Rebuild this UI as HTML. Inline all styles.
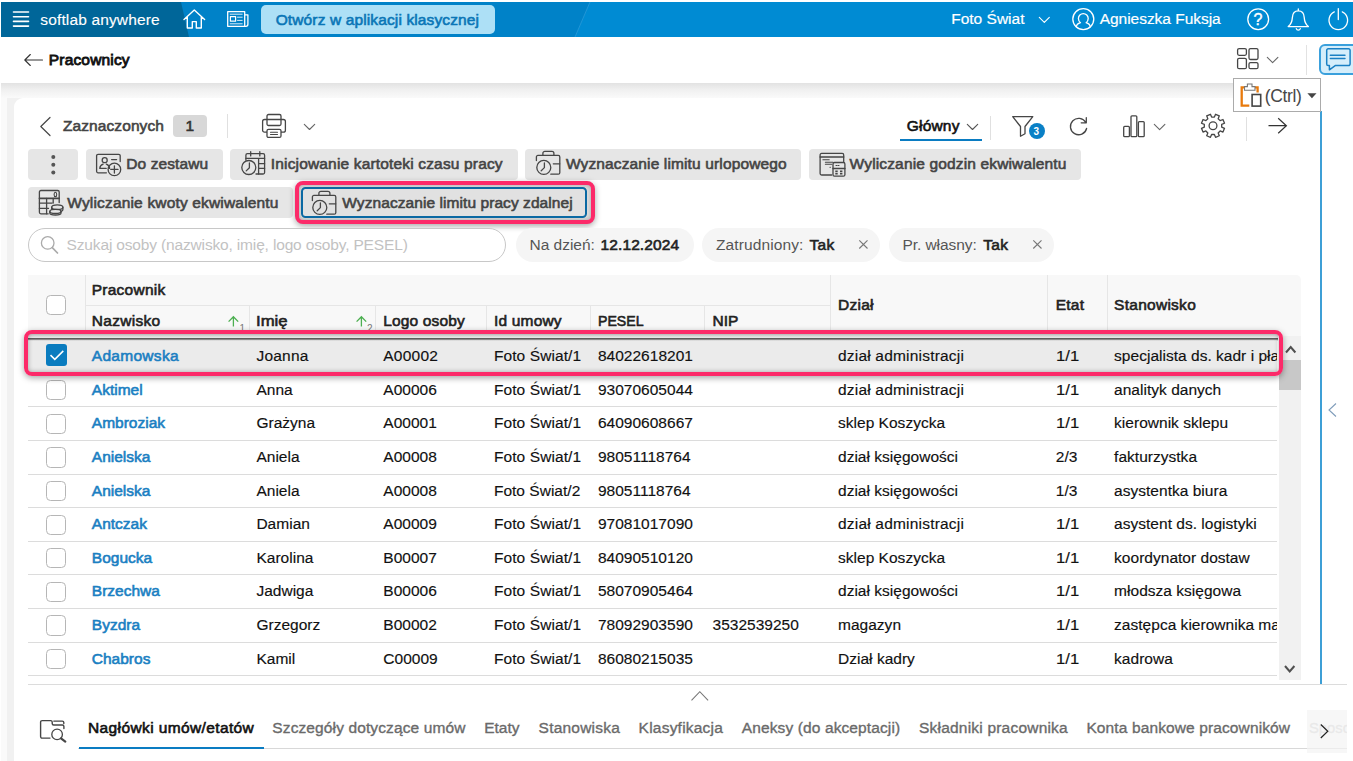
<!DOCTYPE html>
<html lang="pl"><head><meta charset="utf-8"><title>Pracownicy</title>
<style>
*{box-sizing:border-box;margin:0;padding:0}
html,body{width:1353px;height:761px;overflow:hidden;background:#fff}
body{position:relative;font-family:"Liberation Sans",sans-serif;font-size:15px;color:#111}
.a{position:absolute}
.t{position:absolute;white-space:nowrap;line-height:20px;height:20px;margin-top:-10px}
svg{position:absolute;overflow:visible}
.ic{fill:none;stroke:#464646;stroke-width:1.3;stroke-linecap:round;stroke-linejoin:round}
.icw{fill:none;stroke:#fff;stroke-width:1.4;stroke-linecap:round;stroke-linejoin:round}
.btn{position:absolute;height:30.5px;background:#e6e6e6;border-radius:4px}
.chip{position:absolute;height:34px;top:227.500px;background:#f5f5f5;border-radius:17px}
.cb{position:absolute;left:45.600px;width:20.400px;height:20.400px;border:1.600px solid #b6b6b6;border-radius:4.500px;background:#fff}
.hl{position:absolute;background:#dcdcdc;height:1px}
.vl{position:absolute;background:#e6e6e6;width:1px}
</style></head><body>
<div class="a" style="left:1px;top:2px;width:1352px;height:35px;background:#008bd3"></div>
<svg style="left:0;top:2px" width="600" height="35"><polygon points="1,0 590,0 575,35 1,35" fill="#0082c8"/><path d="M590 0L575 35" stroke="#3aa3dc" stroke-width="1" fill="none" opacity=".55"/></svg>
<svg style="left:0;top:2px" width="200" height="35"><polygon points="1,0 181,0 189,35 1,35" fill="#006699"/></svg>
<div class="a" style="left:0;top:37px;width:1353px;height:46px;background:#fff"></div>
<div class="a" style="left:1px;top:83px;width:1320px;height:678px;background:#fafafa"></div>
<div class="a" style="left:1px;top:83px;width:1320px;height:15px;background:linear-gradient(180deg,#e2e2e2 0,#f0f0f0 45%,#fafafa 100%)"></div>
<div class="a" style="left:7px;top:98.300px;width:30px;height:663px;background:#f1f1f1"></div>
<div class="a" style="left:14.300px;top:98.300px;width:1333px;height:663px;background:#fff;border-top-left-radius:9px"></div>
<div class="a" style="left:1321px;top:83px;width:32px;height:602px;background:#fff"></div>
<div class="a" style="left:1320.3px;top:111px;width:1.7px;height:573px;background:#3d9fd6"></div>
<svg style="left:13px;top:11px" width="17" height="17" class="icw"><path d="M0.5 1h15M0.5 5.7h15M0.5 10.4h15M0.5 15.1h15" stroke-width="1.6"/></svg>
<div class="t" style="left:40.3px;top:19.5px;font-size:15.50px;color:#fff;-webkit-text-stroke:0.12px #fff;letter-spacing:0.143px;">softlab anywhere</div>
<svg style="left:183px;top:8.5px" width="23" height="20" class="icw"><path d="M1 10.5L11.3 1L21.6 10.5M4.3 8.3V19h5v-6.4h4V19h5V8.3"/></svg>
<svg style="left:227px;top:11px" width="22" height="16" class="icw"><path d="M0.7 0.7h17v14.6h-17zM17.7 3.8h3.2v9.5a2 2 0 0 1-2 2h-1.2" stroke-width="1.3"/><path d="M3.2 3.2h12M3.2 12.8h12M10.5 6.2h4.7M10.5 9.4h4.7" stroke-width="1" opacity=".85"/><rect x="3.4" y="5.6" width="5.2" height="4.6" stroke-width="1.2"/></svg>
<div class="a" style="left:261.3px;top:5px;width:233.7px;height:28.7px;background:#ade0f6;border-radius:5px"></div>
<div class="t" style="left:275.7px;top:19.5px;font-size:15.50px;color:#0a76b6;-webkit-text-stroke:0.60px #0a76b6;letter-spacing:0.125px;">Otwórz w aplikacji klasycznej</div>
<div class="t" style="left:951.2px;top:19.4px;font-size:15.50px;color:#fff;-webkit-text-stroke:0.20px #fff;letter-spacing:0.007px;">Foto Świat</div>
<svg style="left:1038.8px;top:16.5px" width="11" height="6" class="icw"><path d="M0.3 0.3L5.3 5.3L10.3 0.3" stroke-width="1.1"/></svg>
<svg style="left:1072px;top:7.600px" width="23" height="23" class="icw"><circle cx="11.300" cy="11.100" r="10.500" stroke-width="1.300"/><path d="M4.300 18.800c.2-2.300 1.600-3.300 4.200-4.100c-1.500-1-2.100-2.400-2.100-4.200a4.900 4.900 0 0 1 9.800 0c0 1.800-.6 3.200-2.100 4.200c2.600.8 4 1.800 4.200 4.100" stroke-width="1.300"/></svg>
<div class="t" style="left:1099.7px;top:19.4px;font-size:15.50px;color:#fff;-webkit-text-stroke:0.20px #fff;letter-spacing:-0.031px;">Agnieszka Fuksja</div>
<svg style="left:1247px;top:8px" width="23" height="23" class="icw"><circle cx="11.200" cy="11.200" r="10.400" stroke-width="1.300"/></svg>
<div class="t" style="left:1253.5px;top:19.5px;font-size:16.00px;color:#fff;-webkit-text-stroke:0.40px #fff;letter-spacing:0.694px;">?</div>
<svg style="left:1287.300px;top:7.500px" width="23" height="23" class="icw"><path d="M1.200 18.600c3-2.200 3.900-4.600 4.200-9.200c.2-4 2.600-6.600 5.900-6.600s5.700 2.600 5.900 6.600c.3 4.600 1.200 7 4.200 9.200zM11.300 2.800V1M9.300 20.600a2.100 2.100 0 0 0 4 0" stroke-width="1.300"/></svg>
<svg style="left:1328.400px;top:8px" width="21" height="22" class="icw"><path d="M6.300 3.900a9.300 9.300 0 1 0 8 0M10.300 0.600v11" stroke-width="1.300"/></svg>
<svg style="left:24px;top:53.5px" width="19" height="12" class="ic"><path d="M18.5 6H0.800M6.300 0.500L0.800 6L6.300 11.500" stroke="#333" stroke-width="1.1"/></svg>
<div class="t" style="left:48.8px;top:59.8px;font-size:15.50px;color:#111;-webkit-text-stroke:0.85px #111;letter-spacing:0.174px;">Pracownicy</div>
<svg style="left:1236.6px;top:48px" width="22" height="21" class="ic"><rect x="0.600" y="0.600" width="8.800" height="6.700" rx="1.500"/><rect x="12" y="0.600" width="9" height="10.900" rx="1.500"/><rect x="0.600" y="10.300" width="8.800" height="10.400" rx="1.500"/><rect x="12" y="14.600" width="9" height="6.100" rx="1.500"/></svg>
<svg style="left:1266.8px;top:57px" width="12" height="6" class="ic"><path d="M0.300 0.300L5.600 5.600L10.900 0.300" stroke-width="1.1" stroke="#666"/></svg>
<div class="a" style="left:1306px;top:45px;width:1px;height:30px;background:#e2e2e2"></div>
<div class="a" style="left:1319px;top:44.300px;width:40px;height:31px;background:#d5eefb;border:2px solid #3aa0dc;border-radius:6px"></div>
<svg style="left:1326.400px;top:47.500px" width="25" height="23" class="ic"><path d="M2.200 0.800h20.400a1.500 1.500 0 0 1 1.500 1.500v13.800a1.500 1.500 0 0 1-1.500 1.500h-13.400l-5.800 4.200v-4.200h-1.200a1.500 1.500 0 0 1-1.500-1.500v-13.800a1.500 1.500 0 0 1 1.500-1.500z" stroke="#1a80c4" stroke-width="1.500"/><path d="M4.300 7.300h14.700M4.300 10.500h14.700" stroke="#1a80c4" stroke-width="1.400"/></svg>
<div class="a" style="left:1233.300px;top:78.200px;width:87.500px;height:33.500px;background:#fff;border:1px solid #ababab"></div>
<svg style="left:1240.400px;top:84px" width="22" height="23"><path d="M6 3.300H1.700V21.600H9.300M15 3.300h2.600V8.500" fill="none" stroke="#e87a0c" stroke-width="2.300"/><path d="M4.500 6.200V2.600h2.900V0h4.600v2.600h3v3.600z" fill="#fff" stroke="#777" stroke-width="1.100"/><rect x="12.100" y="10.500" width="8.600" height="11.600" fill="#fff" stroke="#444" stroke-width="1.600"/></svg>
<div class="t" style="left:1264.8px;top:95.6px;font-size:17.50px;color:#484848;letter-spacing:-0.377px;">(Ctrl)</div>
<svg style="left:1306.500px;top:92.800px" width="10" height="6"><polygon points="0.400,0.200 9.500,0.200 4.950,5.300" fill="#444"/></svg>
<svg style="left:39.700px;top:116.500px" width="11" height="19" class="ic"><path d="M10 0.500L0.800 9.500L10 18.500" stroke-width="1.200"/></svg>
<div class="t" style="left:62.9px;top:126.3px;font-size:15.50px;color:#444;-webkit-text-stroke:0.60px #444;letter-spacing:0.100px;">Zaznaczonych</div>
<div class="a" style="left:173.400px;top:115px;width:33.600px;height:22.300px;background:#d8d8d8;border-radius:4px"></div>
<div class="t" style="left:185.6px;top:126.3px;font-size:15.50px;color:#333;-webkit-text-stroke:0.60px #333;letter-spacing:-0.225px;">1</div>
<div class="a" style="left:227px;top:114px;width:1px;height:24px;background:#e0e0e0"></div>
<svg style="left:262px;top:114px" width="24" height="24" class="ic"><rect x="0.600" y="5.500" width="22.800" height="12.700" rx="2"/><rect x="5" y="0.500" width="14" height="11" rx="1.500"/><rect x="5" y="15.300" width="14" height="8.100" rx="1.500" fill="#fff"/><path d="M8.500 18.200h7M8.500 20.500h7" stroke-width="1.100"/></svg>
<svg style="left:303.500px;top:123.500px" width="12" height="6" class="ic"><path d="M0.300 0.300L5.500 5.500L10.700 0.300" stroke-width="1.100" stroke="#666"/></svg>
<div class="t" style="left:906.8px;top:126.3px;font-size:15.50px;color:#111;-webkit-text-stroke:0.60px #111;letter-spacing:0.184px;">Główny</div>
<svg style="left:967px;top:123.500px" width="12" height="6" class="ic"><path d="M0.300 0.300L5.500 5.500L10.700 0.300" stroke-width="1.100" stroke="#555"/></svg>
<div class="a" style="left:900px;top:139.300px;width:82px;height:2px;background:#0a7cc2"></div>
<div class="a" style="left:990px;top:116px;width:1px;height:24px;background:#e0e0e0"></div>
<svg style="left:1012.300px;top:116.300px" width="22" height="21" class="ic"><path d="M0.700 0.700H20.800L13 10.500V17.800L8.500 20.300V10.500z"/></svg>
<svg style="left:1028.700px;top:123.400px" width="16" height="16"><circle cx="8" cy="8" r="8" fill="#0a80c6"/></svg>
<div class="t" style="left:1033.4px;top:131.6px;font-size:10.00px;color:#fff;font-weight:bold;letter-spacing:1.037px;">3</div>
<svg style="left:1068.800px;top:116.500px" width="19" height="19" class="ic"><path d="M16.800 5.500A8.200 8.200 0 1 0 17.600 11.500M17.300 0.700V5.800H12.200"/></svg>
<svg style="left:1123px;top:115.400px" width="22" height="22" class="ic"><rect x="0.700" y="11.400" width="5.700" height="10.300" rx="1"/><rect x="8" y="0.800" width="5.800" height="20.900" rx="1"/><rect x="15.400" y="6.600" width="5.800" height="15.100" rx="1"/></svg>
<svg style="left:1153.700px;top:123.700px" width="12" height="6" class="ic"><path d="M0.300 0.300L5.600 5.600L10.900 0.300" stroke-width="1.100" stroke="#666"/></svg>
<svg style="left:1200.700px;top:114px" width="24" height="24" class="ic"><path d="M14.57 0.28L18.32 1.84L17.17 4.68L19.12 6.63L21.96 5.48L23.52 9.23L20.69 10.42L20.69 13.18L23.52 14.37L21.96 18.12L19.12 16.97L17.17 18.92L18.32 21.76L14.57 23.32L13.38 20.49L10.62 20.49L9.43 23.32L5.68 21.76L6.83 18.92L4.88 16.97L2.04 18.12L0.48 14.37L3.31 13.18L3.31 10.42L0.48 9.23L2.04 5.48L4.88 6.63L6.83 4.68L5.68 1.84L9.43 0.28L10.62 3.11L13.38 3.11z" stroke-linejoin="round"/><circle cx="12" cy="11.800" r="3.900"/></svg>
<div class="a" style="left:1246px;top:116.500px;width:1px;height:24px;background:#e0e0e0"></div>
<svg style="left:1268px;top:117.800px" width="19" height="16" class="ic"><path d="M0.500 7.700H18.200M10.200 0.200L18.400 7.700L10.200 15.200" stroke="#333" stroke-width="1.200" stroke-linecap="butt" stroke-linejoin="miter"/></svg>
<div class="btn" style="left:28.0px;top:149.0px;width:50.4px"></div>
<svg style="left:50.800px;top:154.500px" width="5" height="20"><circle cx="2.300" cy="2" r="2" fill="#555"/><circle cx="2.300" cy="9.700" r="2" fill="#555"/><circle cx="2.300" cy="17.400" r="2" fill="#555"/></svg>
<div class="btn" style="left:86.2px;top:149.0px;width:136.4px"></div>
<svg style="left:96.4px;top:152.8px" width="26" height="25" class="ic"><path d="M10.400 19.800H2.100a1.500 1.500 0 0 1-1.500-1.500V2.800a1.500 1.500 0 0 1 1.500-1.500H22.700a1.500 1.500 0 0 1 1.500 1.500V8.600"/><circle cx="8.700" cy="7.200" r="2.500"/><path d="M3.800 15.400c0-2.600 1.400-3.600 3.300-4.300M13.600 15.400c0-2.600-1.400-3.600-3.300-4.300M3.800 15.400h6.400"/><path d="M15.600 6.600h5"/><circle cx="18.400" cy="16.400" r="6.300"/><path d="M18.400 12.800v7.200M14.800 16.400h7.200"/></svg>
<div class="t" style="left:126.3px;top:164.3px;font-size:15.50px;color:#444;-webkit-text-stroke:0.60px #444;letter-spacing:0.096px;">Do zestawu</div>
<div class="btn" style="left:230.0px;top:149.0px;width:287.7px"></div>
<svg style="left:240.5px;top:150.5px" width="25" height="25" class="ic"><path d="M4.900 9V4.200a1.500 1.500 0 0 1 1.500-1.500h15.700a1.500 1.500 0 0 1 1.500 1.500v17.300a1.500 1.500 0 0 1-1.500 1.500H15"/><path d="M9.700 0.700v4.200M18.800 0.700v4.200M4.900 7.400h18.700M17.600 7.400v15.600M17.600 12.700h6M17.600 17.400h6"/><circle cx="7.800" cy="16.500" r="7"/><path d="M8.400 12v4.700l-3.200 3.200"/></svg>
<div class="t" style="left:270.8px;top:164.3px;font-size:15.50px;color:#444;-webkit-text-stroke:0.60px #444;letter-spacing:0.164px;">Inicjowanie kartoteki czasu pracy</div>
<div class="btn" style="left:525.2px;top:149.0px;width:276.3px"></div>
<svg style="left:535.5px;top:151.0px" width="25" height="25" class="ic"><path d="M6.900 4.400V2.300a2 2 0 0 1 2-2h7a2 2 0 0 1 2 2V4.400"/><path d="M0.400 9.500V5.900a1.500 1.500 0 0 1 1.500-1.500h20.400a1.500 1.500 0 0 1 1.500 1.500v15.800a1.500 1.500 0 0 1-1.500 1.500H14.800"/><path d="M17.300 12.800h6.400"/><circle cx="7.800" cy="16.400" r="7"/><path d="M8.400 11.800v4.800l-3.200 3.200"/></svg>
<div class="t" style="left:565.9px;top:164.3px;font-size:15.50px;color:#444;-webkit-text-stroke:0.60px #444;letter-spacing:0.134px;">Wyznaczanie limitu urlopowego</div>
<div class="btn" style="left:809.3px;top:149.0px;width:271.7px"></div>
<svg style="left:820.0px;top:152.5px" width="26" height="24" class="ic"><path d="M11.700 22H1.600a1.500 1.500 0 0 1-1.500-1.500V1.900a1.500 1.500 0 0 1 1.500-1.500H22.200a1.500 1.500 0 0 1 1.500 1.500V8.800"/><path d="M0.100 4.100H23.700" stroke-width="1.500"/><path d="M2.900 6.800h6.300M5.400 9.300h7.600M5.400 11.300h6.300M10 14.200h.4" stroke-width="1.100"/><rect x="13" y="9.500" width="11.900" height="13.700" rx="1.500"/><path d="M13 15.400h11.900" stroke-width="1.500"/><path d="M16 12.500h1M18 12.500h1" stroke-width="1"/><path d="M15.300 18.300h2.400M20 18.300h2.400M15.300 20.600h2.400M20 20.600h2.400" stroke-width="1.600" stroke-linecap="butt"/></svg>
<div class="t" style="left:849.6px;top:164.3px;font-size:15.50px;color:#444;-webkit-text-stroke:0.60px #444;letter-spacing:0.149px;">Wyliczanie godzin ekwiwalentu</div>
<div class="btn" style="left:28.0px;top:187.2px;width:264.9px"></div>
<svg style="left:39.0px;top:190.0px" width="25" height="26" class="ic"><path d="M9.200 23.800H1.900a1.500 1.500 0 0 1-1.500-1.500V2a1.500 1.500 0 0 1 1.500-1.500H18.700a1.500 1.500 0 0 1 1.500 1.500V12.500"/><path d="M0.400 8.400H20.200" stroke-width="1.600"/><path d="M0.400 13.100H13M0.400 18.400H9.500M7.600 8.400V23.800M14.200 8.400V13"/><ellipse cx="16.400" cy="4.400" rx="1.300" ry="2.200" stroke-width="1.100"/><ellipse cx="18.300" cy="17.200" rx="5.600" ry="2.300"/><path d="M12.700 17.200v2.200c0 1.300 2.500 2.300 5.600 2.300s5.600-1 5.600-2.300v-2.200"/><ellipse cx="16.400" cy="21.400" rx="5.600" ry="2" fill="#e6e6e6"/><path d="M10.800 21.400v1.500c0 1.200 2.500 2.100 5.600 2.100s5.600-.9 5.600-2.100v-1.500"/></svg>
<div class="t" style="left:67.3px;top:202.5px;font-size:15.50px;color:#444;-webkit-text-stroke:0.60px #444;letter-spacing:0.167px;">Wyliczanie kwoty ekwiwalentu</div>
<div class="a" style="left:294.700px;top:180.500px;width:300.300px;height:43.500px;border:4.200px solid #fc2a69;border-radius:8px;background:#dcdcdc;box-shadow:0 2px 6px rgba(0,0,0,.35), inset 0 0 4px rgba(0,0,0,.25)"></div>
<div class="a" style="left:301.300px;top:187.100px;width:285.900px;height:30.800px;background:#e1e1e1;border:2px solid #0a69a3;border-radius:4.500px"></div>
<svg style="left:311.9px;top:190.6px" width="25" height="25" class="ic"><path d="M6.900 4.400V2.300a2 2 0 0 1 2-2h7a2 2 0 0 1 2 2V4.400"/><path d="M0.400 9.500V5.900a1.500 1.500 0 0 1 1.500-1.500h20.400a1.500 1.500 0 0 1 1.500 1.500v15.800a1.500 1.500 0 0 1-1.500 1.500H14.800"/><path d="M17.300 12.800h6.400"/><circle cx="7.800" cy="16.400" r="7"/><path d="M8.400 11.800v4.800l-3.200 3.200"/></svg>
<div class="t" style="left:342.3px;top:202.5px;font-size:15.50px;color:#444;-webkit-text-stroke:0.60px #444;letter-spacing:0.071px;">Wyznaczanie limitu pracy zdalnej</div>
<div class="a" style="left:28px;top:227.500px;width:478px;height:34.500px;border:1px solid #c8c8c8;border-radius:17.500px;background:#fff"></div>
<svg style="left:41px;top:236px" width="18" height="18" class="ic"><circle cx="6.700" cy="6.900" r="6.300" stroke="#aaa"/><path d="M11.300 11.600L16.500 17" stroke="#aaa" stroke-width="1.700"/></svg>
<div class="t" style="left:66.6px;top:245.0px;font-size:15.50px;color:#c2c2c2;letter-spacing:-0.158px;">Szukaj osoby (nazwisko, imię, logo osoby, PESEL)</div>
<div class="chip" style="left:515.6px;width:178.4px"></div>
<div class="chip" style="left:702.3px;width:178.2px"></div>
<div class="chip" style="left:888.6px;width:165.4px"></div>
<div class="t" style="left:529.5px;top:244.8px;font-size:15.50px;color:#555;letter-spacing:-0.010px;">Na dzień:</div>
<div class="t" style="left:600.6px;top:244.8px;font-size:15.50px;color:#222;-webkit-text-stroke:0.60px #222;letter-spacing:0.097px;">12.12.2024</div>
<div class="t" style="left:715.9px;top:244.8px;font-size:15.50px;color:#555;letter-spacing:0.124px;">Zatrudniony:</div>
<div class="t" style="left:809.5px;top:244.8px;font-size:15.50px;color:#222;-webkit-text-stroke:0.60px #222;letter-spacing:0.270px;">Tak</div>
<div class="t" style="left:902.4px;top:244.8px;font-size:15.50px;color:#555;letter-spacing:-0.062px;">Pr. własny:</div>
<div class="t" style="left:983.3px;top:244.8px;font-size:15.50px;color:#222;-webkit-text-stroke:0.60px #222;letter-spacing:0.270px;">Tak</div>
<svg style="left:858.7px;top:240.200px" width="9" height="9"><path d="M0.300 0.300L8.500 8.500M8.500 0.300L0.300 8.500" stroke="#777" stroke-width="1.100" fill="none"/></svg>
<svg style="left:1032.5px;top:240.200px" width="9" height="9"><path d="M0.300 0.300L8.500 8.500M8.500 0.300L0.300 8.500" stroke="#777" stroke-width="1.100" fill="none"/></svg>
<div class="a" style="left:28px;top:275px;width:1272.700px;height:61px;background:#f8f8f8;border-top-right-radius:5px"></div>
<div class="vl" style="left:85.0px;top:275px;height:61px"></div>
<div class="vl" style="left:830.2px;top:275px;height:61px"></div>
<div class="vl" style="left:1047.4px;top:275px;height:61px"></div>
<div class="vl" style="left:1106.5px;top:275px;height:61px"></div>
<div class="vl" style="left:248.7px;top:305px;height:31px"></div>
<div class="vl" style="left:375.2px;top:305px;height:31px"></div>
<div class="vl" style="left:486.3px;top:305px;height:31px"></div>
<div class="vl" style="left:589.8px;top:305px;height:31px"></div>
<div class="vl" style="left:703.7px;top:305px;height:31px"></div>
<div class="hl" style="left:85px;top:305px;width:745px;background:#e6e6e6"></div>
<div class="cb" style="top:294.800px"></div>
<div class="t" style="left:91.8px;top:289.6px;font-size:15.50px;color:#222;-webkit-text-stroke:0.60px #222;letter-spacing:0.235px;">Pracownik</div>
<div class="t" style="left:91.8px;top:320.5px;font-size:15.50px;color:#222;-webkit-text-stroke:0.60px #222;letter-spacing:0.276px;">Nazwisko</div>
<div class="t" style="left:256.4px;top:320.5px;font-size:15.50px;color:#222;-webkit-text-stroke:0.60px #222;transform:scaleX(1.0786);transform-origin:0 50%;">Imię</div>
<div class="t" style="left:383.3px;top:320.5px;font-size:15.50px;color:#222;-webkit-text-stroke:0.60px #222;letter-spacing:0.152px;">Logo osoby</div>
<div class="t" style="left:493.9px;top:320.5px;font-size:15.50px;color:#222;-webkit-text-stroke:0.60px #222;letter-spacing:0.194px;">Id umowy</div>
<div class="t" style="left:597.9px;top:320.5px;font-size:15.50px;color:#222;-webkit-text-stroke:0.60px #222;transform:scaleX(0.9123);transform-origin:0 50%;">PESEL</div>
<div class="t" style="left:712.5px;top:320.5px;font-size:15.50px;color:#222;-webkit-text-stroke:0.60px #222;letter-spacing:-0.058px;">NIP</div>
<div class="t" style="left:838.0px;top:305.2px;font-size:15.50px;color:#222;-webkit-text-stroke:0.60px #222;letter-spacing:0.255px;">Dział</div>
<div class="t" style="left:1055.8px;top:305.2px;font-size:15.50px;color:#222;-webkit-text-stroke:0.60px #222;letter-spacing:0.206px;">Etat</div>
<div class="t" style="left:1114.1px;top:305.2px;font-size:15.50px;color:#222;-webkit-text-stroke:0.60px #222;letter-spacing:0.267px;">Stanowisko</div>
<svg style="left:228.0px;top:316px" width="11" height="11"><path d="M5.400 10.500V0.800M0.600 5.600L5.400 0.700L10.200 5.600" fill="none" stroke="#4caf50" stroke-width="1.300"/></svg>
<div class="t" style="left:239.4px;top:329.3px;font-size:10.00px;color:#7a7a7a;letter-spacing:-0.463px;">1</div>
<svg style="left:355.6px;top:316px" width="11" height="11"><path d="M5.400 10.500V0.800M0.600 5.600L5.400 0.700L10.200 5.600" fill="none" stroke="#4caf50" stroke-width="1.300"/></svg>
<div class="t" style="left:367.0px;top:329.3px;font-size:10.00px;color:#7a7a7a;letter-spacing:-0.463px;">2</div>
<div class="a" style="left:27.700px;top:338px;width:1250.600px;height:33.900px;background:#ebebeb"></div>
<div class="t" style="left:91.8px;top:355.9px;font-size:15.50px;color:#1b7fc2;-webkit-text-stroke:0.60px #1b7fc2;letter-spacing:0.290px;">Adamowska</div>
<div class="t" style="left:256.4px;top:355.9px;font-size:15.50px;color:#111;-webkit-text-stroke:0.15px #111;letter-spacing:0.244px;">Joanna</div>
<div class="t" style="left:383.3px;top:355.9px;font-size:15.50px;color:#111;-webkit-text-stroke:0.15px #111;letter-spacing:0.227px;">A00002</div>
<div class="t" style="left:493.9px;top:355.9px;font-size:15.50px;color:#111;-webkit-text-stroke:0.15px #111;letter-spacing:0.099px;">Foto Świat/1</div>
<div class="t" style="left:597.9px;top:355.9px;font-size:15.50px;color:#111;-webkit-text-stroke:0.15px #111;letter-spacing:0.026px;">84022618201</div>
<div class="t" style="left:838.0px;top:355.9px;font-size:15.50px;color:#111;-webkit-text-stroke:0.15px #111;letter-spacing:0.198px;">dział administracji</div>
<div class="t" style="left:1055.8px;top:355.9px;font-size:15.50px;color:#111;-webkit-text-stroke:0.15px #111;transform:scaleX(1.0759);transform-origin:0 50%;">1/1</div>
<div class="t" style="left:1114.1px;top:355.9px;font-size:15.50px;color:#111;-webkit-text-stroke:0.15px #111;letter-spacing:0.020px;">specjalista ds. kadr i płac</div>
<div class="hl" style="left:28px;top:372.8px;width:1249px"></div>
<div class="cb" style="top:379.9px"></div>
<div class="t" style="left:91.8px;top:389.5px;font-size:15.50px;color:#1b7fc2;-webkit-text-stroke:0.60px #1b7fc2;">Aktimel</div>
<div class="t" style="left:256.4px;top:389.5px;font-size:15.50px;color:#111;-webkit-text-stroke:0.15px #111;letter-spacing:0.020px;">Anna</div>
<div class="t" style="left:383.3px;top:389.5px;font-size:15.50px;color:#111;-webkit-text-stroke:0.15px #111;letter-spacing:0.020px;">A00006</div>
<div class="t" style="left:493.9px;top:389.5px;font-size:15.50px;color:#111;-webkit-text-stroke:0.15px #111;letter-spacing:0.099px;">Foto Świat/1</div>
<div class="t" style="left:597.9px;top:389.5px;font-size:15.50px;color:#111;-webkit-text-stroke:0.15px #111;letter-spacing:0.020px;">93070605044</div>
<div class="t" style="left:838.0px;top:389.5px;font-size:15.50px;color:#111;-webkit-text-stroke:0.15px #111;letter-spacing:0.198px;">dział administracji</div>
<div class="t" style="left:1055.8px;top:389.5px;font-size:15.50px;color:#111;-webkit-text-stroke:0.15px #111;transform:scaleX(1.0759);transform-origin:0 50%;">1/1</div>
<div class="t" style="left:1114.1px;top:389.5px;font-size:15.50px;color:#111;-webkit-text-stroke:0.15px #111;letter-spacing:0.020px;">analityk danych</div>
<div class="hl" style="left:28px;top:406.4px;width:1249px"></div>
<div class="cb" style="top:413.6px"></div>
<div class="t" style="left:91.8px;top:423.2px;font-size:15.50px;color:#1b7fc2;-webkit-text-stroke:0.60px #1b7fc2;">Ambroziak</div>
<div class="t" style="left:256.4px;top:423.2px;font-size:15.50px;color:#111;-webkit-text-stroke:0.15px #111;letter-spacing:0.020px;">Grażyna</div>
<div class="t" style="left:383.3px;top:423.2px;font-size:15.50px;color:#111;-webkit-text-stroke:0.15px #111;letter-spacing:0.020px;">A00001</div>
<div class="t" style="left:493.9px;top:423.2px;font-size:15.50px;color:#111;-webkit-text-stroke:0.15px #111;letter-spacing:0.099px;">Foto Świat/1</div>
<div class="t" style="left:597.9px;top:423.2px;font-size:15.50px;color:#111;-webkit-text-stroke:0.15px #111;letter-spacing:0.020px;">64090608667</div>
<div class="t" style="left:838.0px;top:423.2px;font-size:15.50px;color:#111;-webkit-text-stroke:0.15px #111;letter-spacing:0.020px;">sklep Koszycka</div>
<div class="t" style="left:1055.8px;top:423.2px;font-size:15.50px;color:#111;-webkit-text-stroke:0.15px #111;transform:scaleX(1.0759);transform-origin:0 50%;">1/1</div>
<div class="t" style="left:1114.1px;top:423.2px;font-size:15.50px;color:#111;-webkit-text-stroke:0.15px #111;letter-spacing:0.020px;">kierownik sklepu</div>
<div class="hl" style="left:28px;top:440.0px;width:1249px"></div>
<div class="cb" style="top:447.2px"></div>
<div class="t" style="left:91.8px;top:456.8px;font-size:15.50px;color:#1b7fc2;-webkit-text-stroke:0.60px #1b7fc2;">Anielska</div>
<div class="t" style="left:256.4px;top:456.8px;font-size:15.50px;color:#111;-webkit-text-stroke:0.15px #111;letter-spacing:0.020px;">Aniela</div>
<div class="t" style="left:383.3px;top:456.8px;font-size:15.50px;color:#111;-webkit-text-stroke:0.15px #111;letter-spacing:0.020px;">A00008</div>
<div class="t" style="left:493.9px;top:456.8px;font-size:15.50px;color:#111;-webkit-text-stroke:0.15px #111;letter-spacing:0.099px;">Foto Świat/1</div>
<div class="t" style="left:597.9px;top:456.8px;font-size:15.50px;color:#111;-webkit-text-stroke:0.15px #111;letter-spacing:0.020px;">98051118764</div>
<div class="t" style="left:838.0px;top:456.8px;font-size:15.50px;color:#111;-webkit-text-stroke:0.15px #111;letter-spacing:0.020px;">dział księgowości</div>
<div class="t" style="left:1055.8px;top:456.8px;font-size:15.50px;color:#111;-webkit-text-stroke:0.15px #111;letter-spacing:0.020px;">2/3</div>
<div class="t" style="left:1114.1px;top:456.8px;font-size:15.50px;color:#111;-webkit-text-stroke:0.15px #111;letter-spacing:0.020px;">fakturzystka</div>
<div class="hl" style="left:28px;top:473.6px;width:1249px"></div>
<div class="cb" style="top:480.9px"></div>
<div class="t" style="left:91.8px;top:490.5px;font-size:15.50px;color:#1b7fc2;-webkit-text-stroke:0.60px #1b7fc2;">Anielska</div>
<div class="t" style="left:256.4px;top:490.5px;font-size:15.50px;color:#111;-webkit-text-stroke:0.15px #111;letter-spacing:0.020px;">Aniela</div>
<div class="t" style="left:383.3px;top:490.5px;font-size:15.50px;color:#111;-webkit-text-stroke:0.15px #111;letter-spacing:0.020px;">A00008</div>
<div class="t" style="left:493.9px;top:490.5px;font-size:15.50px;color:#111;-webkit-text-stroke:0.15px #111;letter-spacing:0.020px;">Foto Świat/2</div>
<div class="t" style="left:597.9px;top:490.5px;font-size:15.50px;color:#111;-webkit-text-stroke:0.15px #111;letter-spacing:0.020px;">98051118764</div>
<div class="t" style="left:838.0px;top:490.5px;font-size:15.50px;color:#111;-webkit-text-stroke:0.15px #111;letter-spacing:0.020px;">dział księgowości</div>
<div class="t" style="left:1055.8px;top:490.5px;font-size:15.50px;color:#111;-webkit-text-stroke:0.15px #111;letter-spacing:0.020px;">1/3</div>
<div class="t" style="left:1114.1px;top:490.5px;font-size:15.50px;color:#111;-webkit-text-stroke:0.15px #111;letter-spacing:0.020px;">asystentka biura</div>
<div class="hl" style="left:28px;top:507.2px;width:1249px"></div>
<div class="cb" style="top:514.5px"></div>
<div class="t" style="left:91.8px;top:524.1px;font-size:15.50px;color:#1b7fc2;-webkit-text-stroke:0.60px #1b7fc2;">Antczak</div>
<div class="t" style="left:256.4px;top:524.1px;font-size:15.50px;color:#111;-webkit-text-stroke:0.15px #111;letter-spacing:0.020px;">Damian</div>
<div class="t" style="left:383.3px;top:524.1px;font-size:15.50px;color:#111;-webkit-text-stroke:0.15px #111;letter-spacing:0.020px;">A00009</div>
<div class="t" style="left:493.9px;top:524.1px;font-size:15.50px;color:#111;-webkit-text-stroke:0.15px #111;letter-spacing:0.099px;">Foto Świat/1</div>
<div class="t" style="left:597.9px;top:524.1px;font-size:15.50px;color:#111;-webkit-text-stroke:0.15px #111;letter-spacing:0.020px;">97081017090</div>
<div class="t" style="left:838.0px;top:524.1px;font-size:15.50px;color:#111;-webkit-text-stroke:0.15px #111;letter-spacing:0.198px;">dział administracji</div>
<div class="t" style="left:1055.8px;top:524.1px;font-size:15.50px;color:#111;-webkit-text-stroke:0.15px #111;transform:scaleX(1.0759);transform-origin:0 50%;">1/1</div>
<div class="t" style="left:1114.1px;top:524.1px;font-size:15.50px;color:#111;-webkit-text-stroke:0.15px #111;letter-spacing:0.020px;">asystent ds. logistyki</div>
<div class="hl" style="left:28px;top:540.8px;width:1249px"></div>
<div class="cb" style="top:548.1px"></div>
<div class="t" style="left:91.8px;top:557.7px;font-size:15.50px;color:#1b7fc2;-webkit-text-stroke:0.60px #1b7fc2;">Bogucka</div>
<div class="t" style="left:256.4px;top:557.7px;font-size:15.50px;color:#111;-webkit-text-stroke:0.15px #111;letter-spacing:0.020px;">Karolina</div>
<div class="t" style="left:383.3px;top:557.7px;font-size:15.50px;color:#111;-webkit-text-stroke:0.15px #111;letter-spacing:0.020px;">B00007</div>
<div class="t" style="left:493.9px;top:557.7px;font-size:15.50px;color:#111;-webkit-text-stroke:0.15px #111;letter-spacing:0.099px;">Foto Świat/1</div>
<div class="t" style="left:597.9px;top:557.7px;font-size:15.50px;color:#111;-webkit-text-stroke:0.15px #111;letter-spacing:0.020px;">84090510120</div>
<div class="t" style="left:838.0px;top:557.7px;font-size:15.50px;color:#111;-webkit-text-stroke:0.15px #111;letter-spacing:0.020px;">sklep Koszycka</div>
<div class="t" style="left:1055.8px;top:557.7px;font-size:15.50px;color:#111;-webkit-text-stroke:0.15px #111;transform:scaleX(1.0759);transform-origin:0 50%;">1/1</div>
<div class="t" style="left:1114.1px;top:557.7px;font-size:15.50px;color:#111;-webkit-text-stroke:0.15px #111;letter-spacing:0.020px;">koordynator dostaw</div>
<div class="hl" style="left:28px;top:574.4px;width:1249px"></div>
<div class="cb" style="top:581.8px"></div>
<div class="t" style="left:91.8px;top:591.4px;font-size:15.50px;color:#1b7fc2;-webkit-text-stroke:0.60px #1b7fc2;">Brzechwa</div>
<div class="t" style="left:256.4px;top:591.4px;font-size:15.50px;color:#111;-webkit-text-stroke:0.15px #111;letter-spacing:0.020px;">Jadwiga</div>
<div class="t" style="left:383.3px;top:591.4px;font-size:15.50px;color:#111;-webkit-text-stroke:0.15px #111;letter-spacing:0.020px;">B00006</div>
<div class="t" style="left:493.9px;top:591.4px;font-size:15.50px;color:#111;-webkit-text-stroke:0.15px #111;letter-spacing:0.099px;">Foto Świat/1</div>
<div class="t" style="left:597.9px;top:591.4px;font-size:15.50px;color:#111;-webkit-text-stroke:0.15px #111;letter-spacing:0.020px;">58070905464</div>
<div class="t" style="left:838.0px;top:591.4px;font-size:15.50px;color:#111;-webkit-text-stroke:0.15px #111;letter-spacing:0.020px;">dział księgowości</div>
<div class="t" style="left:1055.8px;top:591.4px;font-size:15.50px;color:#111;-webkit-text-stroke:0.15px #111;transform:scaleX(1.0759);transform-origin:0 50%;">1/1</div>
<div class="t" style="left:1114.1px;top:591.4px;font-size:15.50px;color:#111;-webkit-text-stroke:0.15px #111;letter-spacing:0.020px;">młodsza księgowa</div>
<div class="hl" style="left:28px;top:608.0px;width:1249px"></div>
<div class="cb" style="top:615.4px"></div>
<div class="t" style="left:91.8px;top:625.0px;font-size:15.50px;color:#1b7fc2;-webkit-text-stroke:0.60px #1b7fc2;">Byzdra</div>
<div class="t" style="left:256.4px;top:625.0px;font-size:15.50px;color:#111;-webkit-text-stroke:0.15px #111;letter-spacing:0.020px;">Grzegorz</div>
<div class="t" style="left:383.3px;top:625.0px;font-size:15.50px;color:#111;-webkit-text-stroke:0.15px #111;letter-spacing:0.020px;">B00002</div>
<div class="t" style="left:493.9px;top:625.0px;font-size:15.50px;color:#111;-webkit-text-stroke:0.15px #111;letter-spacing:0.099px;">Foto Świat/1</div>
<div class="t" style="left:597.9px;top:625.0px;font-size:15.50px;color:#111;-webkit-text-stroke:0.15px #111;letter-spacing:0.020px;">78092903590</div>
<div class="t" style="left:712.5px;top:625.0px;font-size:15.50px;color:#111;-webkit-text-stroke:0.15px #111;letter-spacing:0.020px;">3532539250</div>
<div class="t" style="left:838.0px;top:625.0px;font-size:15.50px;color:#111;-webkit-text-stroke:0.15px #111;letter-spacing:0.020px;">magazyn</div>
<div class="t" style="left:1055.8px;top:625.0px;font-size:15.50px;color:#111;-webkit-text-stroke:0.15px #111;transform:scaleX(1.0759);transform-origin:0 50%;">1/1</div>
<div class="t" style="left:1114.1px;top:625.0px;font-size:15.50px;color:#111;-webkit-text-stroke:0.15px #111;letter-spacing:0.020px;">zastępca kierownika mag</div>
<div class="hl" style="left:28px;top:641.6px;width:1249px"></div>
<div class="cb" style="top:649.1px"></div>
<div class="t" style="left:91.8px;top:658.7px;font-size:15.50px;color:#1b7fc2;-webkit-text-stroke:0.60px #1b7fc2;">Chabros</div>
<div class="t" style="left:256.4px;top:658.7px;font-size:15.50px;color:#111;-webkit-text-stroke:0.15px #111;letter-spacing:0.020px;">Kamil</div>
<div class="t" style="left:383.3px;top:658.7px;font-size:15.50px;color:#111;-webkit-text-stroke:0.15px #111;letter-spacing:0.020px;">C00009</div>
<div class="t" style="left:493.9px;top:658.7px;font-size:15.50px;color:#111;-webkit-text-stroke:0.15px #111;letter-spacing:0.099px;">Foto Świat/1</div>
<div class="t" style="left:597.9px;top:658.7px;font-size:15.50px;color:#111;-webkit-text-stroke:0.15px #111;letter-spacing:0.020px;">86080215035</div>
<div class="t" style="left:838.0px;top:658.7px;font-size:15.50px;color:#111;-webkit-text-stroke:0.15px #111;letter-spacing:0.020px;">Dział kadry</div>
<div class="t" style="left:1055.8px;top:658.7px;font-size:15.50px;color:#111;-webkit-text-stroke:0.15px #111;transform:scaleX(1.0759);transform-origin:0 50%;">1/1</div>
<div class="t" style="left:1114.1px;top:658.7px;font-size:15.50px;color:#111;-webkit-text-stroke:0.15px #111;letter-spacing:0.020px;">kadrowa</div>
<div class="hl" style="left:28px;top:675.2px;width:1249px"></div>
<div class="a" style="left:1277px;top:336px;width:2.300px;height:340px;background:#fff"></div>
<div class="a" style="left:1279.300px;top:336px;width:21.500px;height:343.500px;background:#f1f1f1"></div>
<div class="a" style="left:1279.300px;top:360px;width:21.500px;height:29.800px;background:#c8c8c8"></div>
<svg style="left:1284.800px;top:344.500px" width="12" height="9"><path d="M1 7.500L5.700 2L10.400 7.500" fill="none" stroke="#505050" stroke-width="2"/></svg>
<svg style="left:1284.400px;top:665px" width="12" height="9"><path d="M1 1L5.700 6.500L10.400 1" fill="none" stroke="#505050" stroke-width="2"/></svg>
<div class="a" style="left:27.700px;top:334px;width:1250.600px;height:4px;background:linear-gradient(180deg,#d8d8d8,#ececec)"></div>
<div class="a" style="left:27.700px;top:337.800px;width:1250.600px;height:3px;background:linear-gradient(180deg,#555 0,#666 40%,#cfcfcf 70%,#ebebeb 100%)"></div>
<div class="a" style="left:45.500px;top:344px;width:21.100px;height:22px;background:#0a7cbf;border-radius:3px"></div>
<svg style="left:49.500px;top:350px" width="14" height="11"><path d="M0.500 5.100L4.800 9.400L13.300 0.900" fill="none" stroke="#fff" stroke-width="1.500"/></svg>
<div class="a" style="left:23.500px;top:330.300px;width:1259px;height:45.800px;border:4.200px solid #fc2a69;border-radius:8px;box-shadow:0 2px 6px rgba(0,0,0,.35), inset 0 0 5px rgba(0,0,0,.3)"></div>
<svg style="left:1328px;top:402.700px" width="9" height="15"><path d="M8 0.500L1 7L8 13.500" fill="none" stroke="#7f9cba" stroke-width="1.100"/></svg>
<div class="hl" style="left:28px;top:684px;width:1319px;background:#dcdcdc"></div>
<svg style="left:691px;top:691.300px" width="18" height="10"><path d="M0.500 9.300L8.800 0.700L17.100 9.300" fill="none" stroke="#777" stroke-width="1.100"/></svg>
<svg style="left:40.300px;top:719.700px" width="27" height="23" class="ic"><path d="M10 18.100H2.100a1.500 1.500 0 0 1-1.500-1.500V2.100a1.500 1.500 0 0 1 1.500-1.500h8.600a1.500 1.500 0 0 1 1.500 1.500v1.400a1.500 1.500 0 0 0 1.500 1.500h8.700a1.500 1.500 0 0 1 1.500 1.500V8.500" stroke-width="1.400"/><path d="M13.800 1.100h8.500a1.500 1.500 0 0 1 1.500 1.500v1" stroke-width="1.400"/><circle cx="17.100" cy="14.400" r="5.300"/><path d="M21 18.300L25.300 21.600" stroke-width="2.200"/></svg>
<div class="t" style="left:88.0px;top:728.0px;font-size:15.50px;color:#111;-webkit-text-stroke:0.60px #111;letter-spacing:0.384px;">Nagłówki umów/etatów</div>
<div class="t" style="left:272.3px;top:728.0px;font-size:15.50px;color:#6a6a6a;-webkit-text-stroke:0.35px #6a6a6a;letter-spacing:0.120px;">Szczegóły dotyczące umów</div>
<div class="t" style="left:484.2px;top:728.0px;font-size:15.50px;color:#6a6a6a;-webkit-text-stroke:0.35px #6a6a6a;letter-spacing:-0.006px;">Etaty</div>
<div class="t" style="left:538.6px;top:728.0px;font-size:15.50px;color:#6a6a6a;-webkit-text-stroke:0.35px #6a6a6a;letter-spacing:0.214px;">Stanowiska</div>
<div class="t" style="left:638.6px;top:728.0px;font-size:15.50px;color:#6a6a6a;-webkit-text-stroke:0.35px #6a6a6a;letter-spacing:0.222px;">Klasyfikacja</div>
<div class="t" style="left:741.8px;top:728.0px;font-size:15.50px;color:#6a6a6a;-webkit-text-stroke:0.35px #6a6a6a;letter-spacing:0.115px;">Aneksy (do akceptacji)</div>
<div class="t" style="left:919.0px;top:728.0px;font-size:15.50px;color:#6a6a6a;-webkit-text-stroke:0.35px #6a6a6a;letter-spacing:0.208px;">Składniki pracownika</div>
<div class="t" style="left:1086.4px;top:728.0px;font-size:15.50px;color:#6a6a6a;-webkit-text-stroke:0.35px #6a6a6a;letter-spacing:0.120px;">Konta bankowe pracowników</div>
<div class="t" style="left:1308.8px;top:728.0px;font-size:15.50px;color:#cfcfcf;-webkit-text-stroke:0.35px #cfcfcf;transform:scaleX(0.9533);transform-origin:0 50%;">Sposo</div>
<div class="hl" style="left:78px;top:748px;width:1269px;background:#d8d8d8"></div>
<div class="a" style="left:78.700px;top:746.800px;width:185.200px;height:2.400px;background:#0a7cc2"></div>
<div class="a" style="left:1307px;top:710.400px;width:40.200px;height:42.600px;background:rgba(244,244,244,.7)"></div>
<svg style="left:1320px;top:724.200px" width="9" height="15"><path d="M0.800 0.500L7.800 7.200L0.800 14" fill="none" stroke="#222" stroke-width="1.200"/></svg>
<div class="a" style="left:1347px;top:684px;width:6px;height:77px;background:#fff"></div>
</body></html>
